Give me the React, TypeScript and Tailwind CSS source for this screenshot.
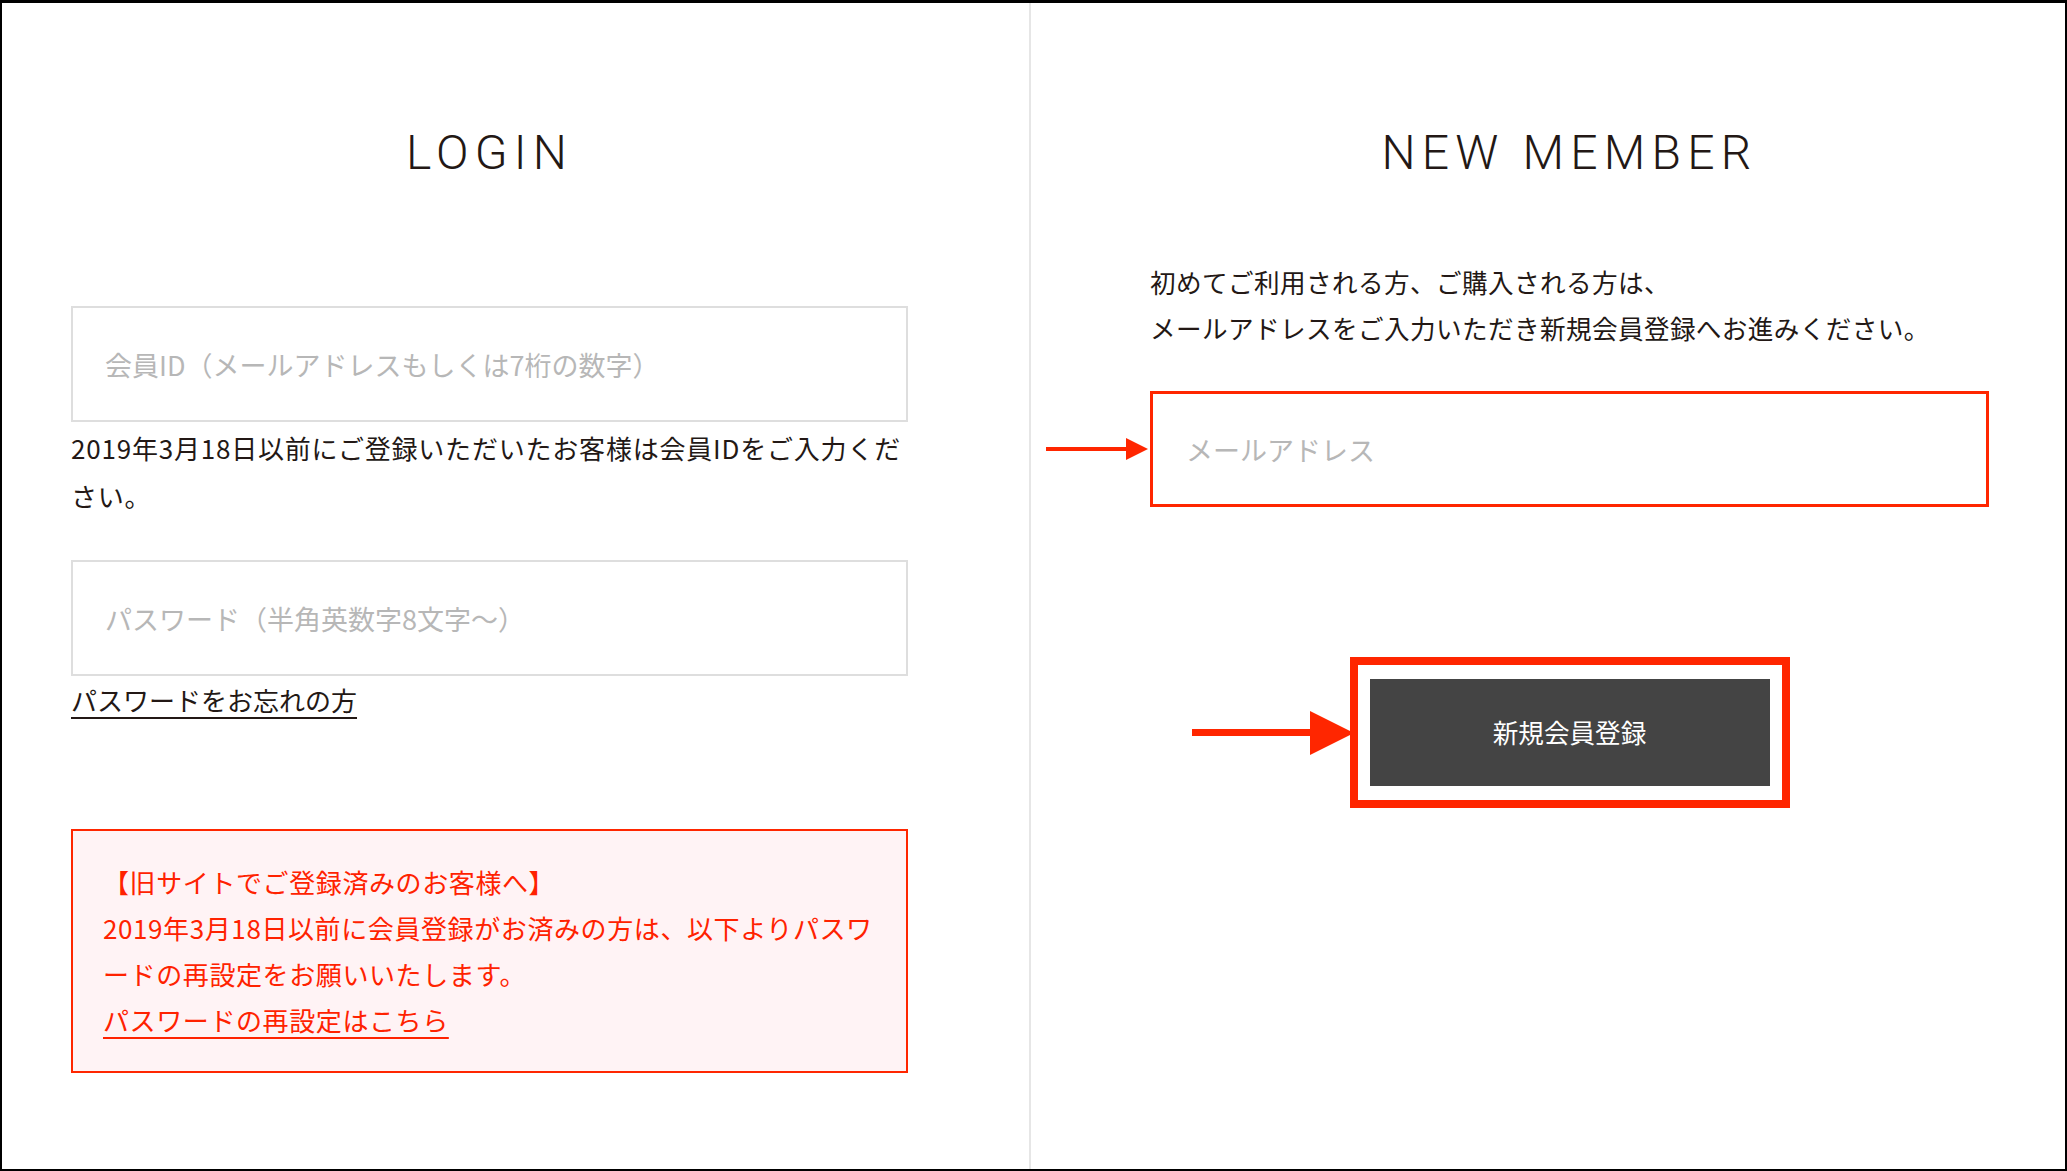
import React from "react";

function SmallArrow() {
  return (
    <svg width="102" height="24" viewBox="0 0 102 24" className="absolute left-[-104px] top-1/2 -translate-y-1/2">
      <rect x="0" y="10" width="84" height="4" fill="#ff2600" />
      <polygon points="80,1 102,12 80,23" fill="#ff2600" />
    </svg>
  );
}

function BigArrow() {
  return (
    <svg width="162" height="44" viewBox="0 0 162 44" className="absolute left-[-166px] top-1/2 -translate-y-1/2">
      <rect x="0" y="18" width="122" height="7" fill="#ff2600" />
      <polygon points="118,0 162,22 118,44" fill="#ff2600" />
    </svg>
  );
}

export default function App() {
  return (
    <div className="w-[2067px] h-[1171px] bg-white border-2 border-t-[3px] border-black flex font-['Noto_Sans_CJK_JP','Noto_Sans',sans-serif] text-[#231815] overflow-hidden">
      {/* LOGIN */}
      <div className="w-[1027px] shrink-0 pl-[69px] pr-[121px] pt-[120px]">
        <h2 className="text-center font-['Roboto',sans-serif] font-light text-[48px] leading-[60px] tracking-[0.13em] text-[#231815]">
          LOGIN
        </h2>
        <input
          className="mt-[123px] block w-full h-[116px] border-2 border-[#dedede] bg-white pl-[32px] text-[27px] outline-none placeholder:text-[#b7b7b7]"
          placeholder="会員ID（メールアドレスもしくは7桁の数字）"
        />
        <p className="mt-[2px] text-[26px] tracking-[0.8px] leading-[48px] whitespace-nowrap">
          2019年3月18日以前にご登録いただいたお客様は会員IDをご入力くだ<br />さい。
        </p>
        <input
          className="mt-[40px] block w-full h-[116px] border-2 border-[#dedede] bg-white pl-[32px] text-[27px] outline-none placeholder:text-[#b7b7b7]"
          placeholder="パスワード（半角英数字8文字〜）"
        />
        <div className="text-[26px] leading-[48px]">
          <a className="underline underline-offset-[6px] decoration-[2px] text-[#231815]">パスワードをお忘れの方</a>
        </div>
        <div className="mt-[105px] border-2 border-[#ff2600] bg-[#fff3f5] px-[30px] py-[28px] text-[#ff2200] text-[26px] tracking-[0.6px] leading-[46px] whitespace-nowrap">
          <p>【旧サイトでご登録済みのお客様へ】</p>
          <p>
            2019年3月18日以前に会員登録がお済みの方は、以下よりパスワ<br />ードの再設定をお願いいたします。
          </p>
          <p>
            <a className="underline underline-offset-[6px] decoration-[2px]">パスワードの再設定はこちら</a>
          </p>
        </div>
      </div>

      {/* NEW MEMBER */}
      <div className="flex-1 border-l-2 border-[#e6e6e6] pl-[119px] pr-[76px] pt-[120px]">
        <h2 className="text-center font-['Roboto',sans-serif] font-light text-[48px] leading-[60px] tracking-[0.13em] text-[#231815]">
          NEW MEMBER
        </h2>
        <p className="mt-[76px] text-[25.6px] tracking-[0.4px] leading-[46px]">
          初めてご利用される方、ご購入される方は、<br />
          メールアドレスをご入力いただき新規会員登録へお進みください。
        </p>
        <div className="relative mt-[40px]">
          <SmallArrow />
          <input
            className="block w-full h-[116px] border-[3px] border-[#ff2600] bg-white pl-[33px] text-[27px] outline-none placeholder:text-[#b7b7b7]"
            placeholder="メールアドレス"
          />
        </div>
        <div className="mt-[150px] flex justify-center">
          <div className="relative border-[8px] border-[#ff2600] px-[12px] py-[14px]">
            <BigArrow />
            <button className="w-[400px] h-[107px] bg-[#444444] text-white text-[25.6px] flex items-center justify-center">
              新規会員登録
            </button>
          </div>
        </div>
      </div>
    </div>
  );
}
